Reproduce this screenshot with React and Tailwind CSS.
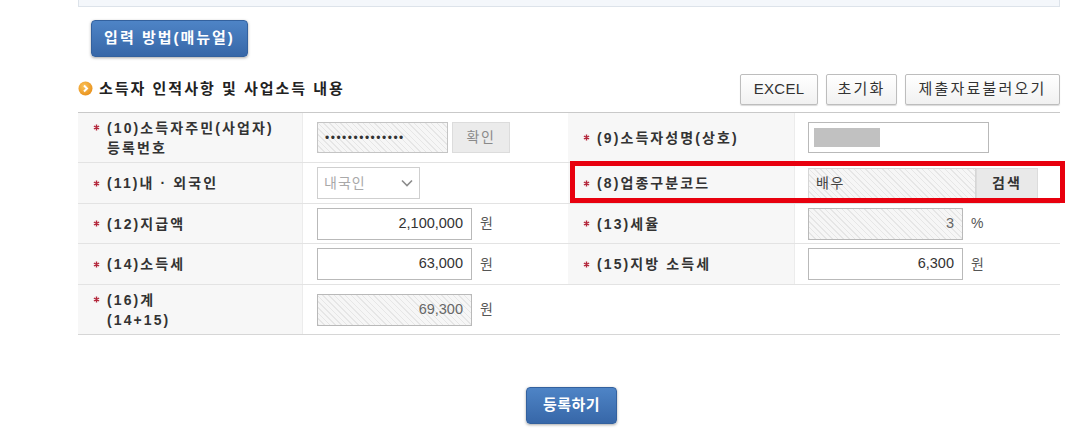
import React from "react";

const HATCH =
  "bg-[repeating-linear-gradient(45deg,#e6e6e6_0px,#e6e6e6_1px,#f6f6f6_1px,#f6f6f6_4px)]";

function Star() {
  return (
    <svg width="7" height="7" viewBox="0 0 7 7" className="mr-[7px] shrink-0">
      <path d="M3.5 0.5 V6.5 M0.9 2 L6.1 5 M0.9 5 L6.1 2" stroke="#b3263a" strokeWidth="1.4" />
    </svg>
  );
}

function Label({ first, second }) {
  return (
    <div className="flex flex-col justify-center bg-[#f7f7f7] border-r border-[#ececec] pl-[15px] text-[14px] font-bold text-[#333] leading-[20px] tracking-[2.1px]">
      <div className="flex items-center">
        <Star />
        <span>{first}</span>
      </div>
      {second && <div className="pl-[14px]">{second}</div>}
    </div>
  );
}

function NumInput({ value, unit, hatched, w = "w-[155px]" }) {
  return (
    <div className="flex items-center">
      <div
        className={`${w} h-[32px] border border-[#b9b9b9] flex items-center justify-end pr-[8px] text-[14.5px] ${
          hatched ? HATCH + " text-[#666]" : "bg-white text-[#333]"
        }`}
      >
        {value}
      </div>
      <span className="ml-[8px] text-[14px] text-[#555]">{unit}</span>
    </div>
  );
}

function TopButton({ children, w, track = "tracking-[2.2px]" }) {
  return (
    <button
      className={`${w} h-[31px] rounded-[2px] border border-[#bdbdbd] bg-[linear-gradient(#ffffff,#f1f1f1)] shadow-[0_1px_1px_rgba(0,0,0,0.15)] text-[15px] text-[#333] ${track}`}
    >
      {children}
    </button>
  );
}

function BlueButton({ children, className }) {
  return (
    <button
      className={`h-[37px] rounded-[4px] border border-[#33619e] bg-[linear-gradient(#4e84c6,#3767a8)] shadow-[0_1px_3px_rgba(0,0,0,0.35)] text-white text-[15px] font-bold ${className}`}
    >
      {children}
    </button>
  );
}

export default function App() {
  return (
    <div className="w-[1075px] h-[445px] bg-white overflow-hidden font-[family-name:'Liberation_Sans','Noto_Sans_CJK_KR',sans-serif]">
      <div className="ml-[78px] w-[982px]">
        {/* 상단 박스 */}
        <div className="h-[7px] bg-[#f4f7fb] border-x border-b border-[#dde3ea]" />

        {/* 입력 방법 */}
        <div className="mt-[13px] ml-[13px]">
          <BlueButton className="w-[157px] tracking-[2px]">입력 방법(매뉴얼)</BlueButton>
        </div>

        {/* 섹션 제목 + 버튼 */}
        <div className="mt-[17px] flex items-center justify-between">
          <div className="flex items-center">
            <svg width="15" height="15" viewBox="0 0 15 15" className="mt-[-2px]">
              <defs>
                <radialGradient id="og" cx="40%" cy="35%" r="70%">
                  <stop offset="0%" stopColor="#fbc35a" />
                  <stop offset="100%" stopColor="#e8901a" />
                </radialGradient>
              </defs>
              <circle cx="7.5" cy="7.5" r="7" fill="url(#og)" />
              <path d="M6 4.5 L9 7.5 L6 10.5" stroke="#fff" strokeWidth="2" fill="none" />
            </svg>
            <span className="ml-[6px] text-[15px] font-bold text-[#222] tracking-[2px]">
              소득자 인적사항 및 사업소득 내용
            </span>
          </div>
          <div className="flex gap-[8px]">
            <TopButton w="w-[78px]" track="tracking-[0.3px]">EXCEL</TopButton>
            <TopButton w="w-[71px]">초기화</TopButton>
            <TopButton w="w-[155px]">제출자료불러오기</TopButton>
          </div>
        </div>

        {/* 입력 표 */}
        <div className="mt-[7px] border-t border-[#c9c9c9]">
          <div className="grid grid-cols-[225px_265px_227px_265px] h-[50px] border-b border-[#e3e3e3]">
            <Label first="(10)소득자주민(사업자)" second="등록번호" />
            <div className="flex items-center pl-[14px]">
              <div className={`w-[131px] h-[31px] border border-[#c4c4c4] ${HATCH} flex items-center pl-[7px] text-[12px] text-[#333] tracking-[1.5px]`}>
                ••••••••••••••
              </div>
              <button className="ml-[4px] w-[58px] h-[31px] bg-[#ebebeb] border border-[#dcdcdc] text-[14px] text-[#8a8a8a] tracking-[1.5px]">
                확인
              </button>
            </div>
            <Label first="(9)소득자성명(상호)" />
            <div className="flex items-center pl-[13px]">
              <div className="w-[181px] h-[31px] border border-[#b9b9b9] bg-white flex items-center pl-[5px]">
                <div className="w-[66px] h-[19px] bg-[#c1c1c1]" />
              </div>
            </div>
          </div>

          <div className="grid grid-cols-[225px_265px_227px_265px] h-[41px] border-b border-[#e3e3e3]">
            <Label first="(11)내 · 외국인" />
            <div className="flex items-center pl-[14px]">
              <div className="w-[103px] h-[32px] border border-[#cfcfcf] bg-white flex items-center justify-between px-[6px] text-[14px] text-[#a9a9a9] tracking-[1px]">
                <span>내국인</span>
                <svg width="12" height="8" viewBox="0 0 12 8">
                  <path d="M1 1.5 L6 6.5 L11 1.5" stroke="#8c8c8c" strokeWidth="1.6" fill="none" />
                </svg>
              </div>
            </div>
            <div className="relative col-span-2 grid grid-cols-[227px_265px]">
              <Label first="(8)업종구분코드" />
              <div className="flex items-center pl-[13px]">
                <div className={`w-[168px] h-[31px] border border-[#d6d6d6] ${HATCH} flex items-center pl-[7px] text-[14px] text-[#444] tracking-[1.5px]`}>
                  배우
                </div>
                <button className="w-[62px] h-[31px] bg-[#e9e9e9] border border-[#dcdcdc] text-[14px] font-bold text-[#333] tracking-[2px]">
                  검색
                </button>
              </div>
              <div className="absolute left-[2px] top-[-2px] right-[-5px] bottom-[0px] border-[5px] border-[#e8000e] pointer-events-none" />
            </div>
          </div>

          <div className="grid grid-cols-[225px_265px_227px_265px] h-[40px] border-b border-[#e3e3e3]">
            <Label first="(12)지급액" />
            <div className="flex items-center pl-[14px]">
              <NumInput value="2,100,000" unit="원" />
            </div>
            <Label first="(13)세율" />
            <div className="flex items-center pl-[13px]">
              <NumInput value="3" unit="%" hatched />
            </div>
          </div>

          <div className="grid grid-cols-[225px_265px_227px_265px] h-[41px] border-b border-[#e3e3e3]">
            <Label first="(14)소득세" />
            <div className="flex items-center pl-[14px]">
              <NumInput value="63,000" unit="원" />
            </div>
            <Label first="(15)지방 소득세" />
            <div className="flex items-center pl-[13px]">
              <NumInput value="6,300" unit="원" />
            </div>
          </div>

          <div className="grid grid-cols-[225px_265px_227px_265px] h-[50px] border-b border-[#d6d6d6]">
            <Label first="(16)계" second="(14+15)" />
            <div className="flex items-center pl-[14px]">
              <NumInput value="69,300" unit="원" hatched />
            </div>
            <div />
            <div />
          </div>
        </div>

        {/* 등록 */}
        <div className="mt-[52px] flex justify-center">
          <BlueButton className="w-[91px] ml-[5px] tracking-[0.5px]">등록하기</BlueButton>
        </div>
      </div>
    </div>
  );
}
